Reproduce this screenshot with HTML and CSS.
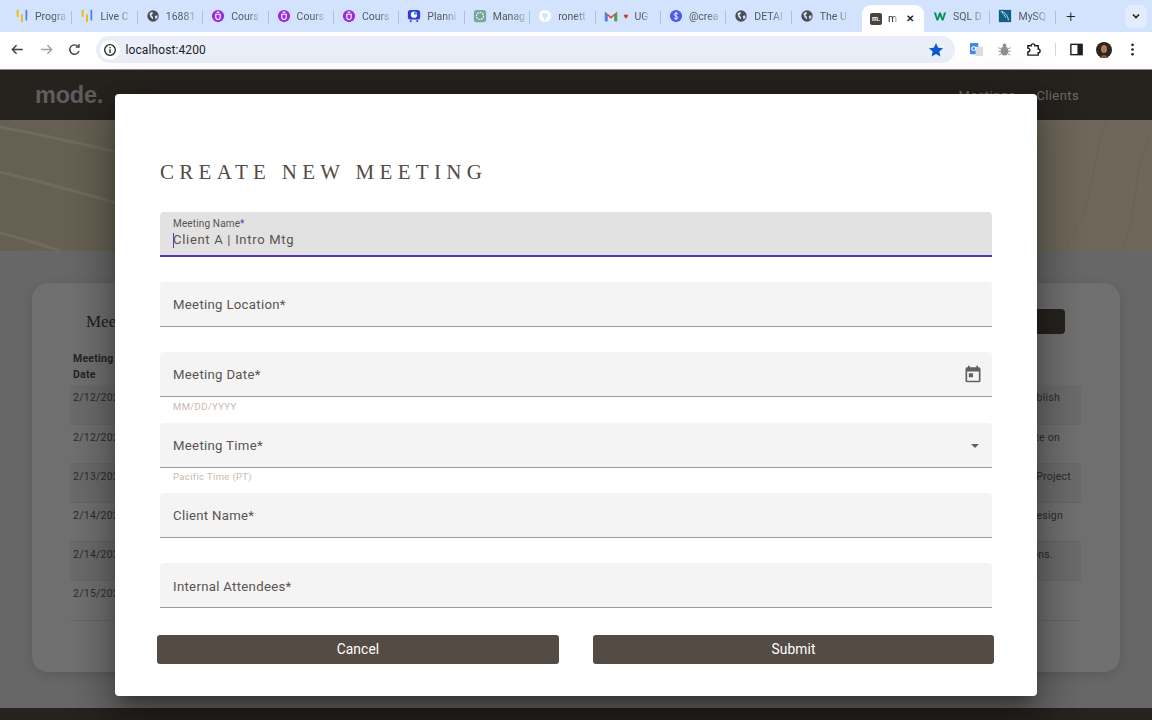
FILE: index.html
```html
<!DOCTYPE html>
<html lang="en">
<head>
<meta charset="utf-8">
<title>mode.</title>
<link rel="stylesheet" href="styles.css">
</head>
<body>
<div class="browser">
  <div class="tabstrip">
    <div class="tab sep"><svg class="fav" viewBox="0 0 16 16"><rect x="2" y="1" width="2" height="8" fill="#f4b400"/><rect x="7" y="6" width="2" height="9" fill="#f4b400"/><rect x="12" y="1" width="2" height="12" fill="#4285f4"/></svg><span class="tl">Progra</span></div>
    <div class="tab sep"><svg class="fav" viewBox="0 0 16 16"><rect x="2" y="1" width="2" height="8" fill="#f4b400"/><rect x="7" y="6" width="2" height="9" fill="#f4b400"/><rect x="12" y="1" width="2" height="12" fill="#4285f4"/></svg><span class="tl">Live C</span></div>
    <div class="tab sep"><svg class="fav" viewBox="0 0 16 16"><circle cx="8" cy="8" r="6.5" fill="#4a4d52"/><path d="M4 5l3-2 1 2-2 2 2 2v3L5 9zM10 8l3-1v3l-2 2z" fill="#d3e3fd"/></svg><span class="tl">16881</span></div>
    <div class="tab sep"><svg class="fav" viewBox="0 0 16 16"><circle cx="8" cy="8" r="7" fill="#9a2be2"/><path d="M5.500 6v3.500a2.500 2.500 0 0 0 5 0V6z" fill="none" stroke="#fff" stroke-width="1.300"/><rect x="6.500" y="3" width="3" height="1.500" fill="#fff"/></svg><span class="tl">Cours</span></div>
    <div class="tab sep"><svg class="fav" viewBox="0 0 16 16"><circle cx="8" cy="8" r="7" fill="#9a2be2"/><path d="M5.500 6v3.500a2.500 2.500 0 0 0 5 0V6z" fill="none" stroke="#fff" stroke-width="1.300"/><rect x="6.500" y="3" width="3" height="1.500" fill="#fff"/></svg><span class="tl">Cours</span></div>
    <div class="tab sep"><svg class="fav" viewBox="0 0 16 16"><circle cx="8" cy="8" r="7" fill="#9a2be2"/><path d="M5.500 6v3.500a2.500 2.500 0 0 0 5 0V6z" fill="none" stroke="#fff" stroke-width="1.300"/><rect x="6.500" y="3" width="3" height="1.500" fill="#fff"/></svg><span class="tl">Cours</span></div>
    <div class="tab sep"><svg class="fav" viewBox="0 0 16 16"><rect x="1" y="1" width="14" height="11" rx="3" fill="#3a38d8"/><circle cx="8" cy="6.500" r="3.600" fill="#fff"/><path d="M8 6.500V3a3.500 3.500 0 0 1 3.500 3.500z" fill="#20b5e8"/><path d="M4 12l-1 3 3-1zM12 12l1 3-3-1z" fill="#3a38d8"/></svg><span class="tl">Planni</span></div>
    <div class="tab sep"><svg class="fav" viewBox="0 0 16 16"><rect x="1" y="1" width="14" height="14" rx="3" fill="#74aa9c"/><circle cx="8" cy="8" r="4" fill="none" stroke="#fff" stroke-width="1.200" stroke-dasharray="2 1"/></svg><span class="tl">Manag</span></div>
    <div class="tab sep"><svg class="fav" viewBox="0 0 16 16"><circle cx="8" cy="8" r="7" fill="#fff"/><path d="M5 4l1.500 1h3L11 4v3.500c0 1.500-1 2.500-2 2.700V13H7v-2.800C6 10 5 9 5 7.500z" fill="#d3e3fd"/></svg><span class="tl">ronett</span></div>
    <div class="tab sep gm"><svg class="fav" viewBox="0 0 16 16"><path d="M1 14V3l7 5.500L15 3v11h-3V7.500L8 11 4 7.500V14z" fill="#ea4335"/><path d="M12 14V7l3-4v11z" fill="#34a853"/><path d="M1 14V3l3 4v7z" fill="#4285f4"/></svg><span class="heart">♥</span><span class="tl">UG</span></div>
    <div class="tab sep"><svg class="fav" viewBox="0 0 16 16"><circle cx="8" cy="8" r="7" fill="#4f5bf0"/><path d="M10 5.500C9 4.500 6 4.500 6 6.300S10 8 10 9.800 7 11.500 6 10.500M8 3.500v9" fill="none" stroke="#fff" stroke-width="1.100"/></svg><span class="tl">@crea</span></div>
    <div class="tab sep"><svg class="fav" viewBox="0 0 16 16"><circle cx="8" cy="8" r="6.500" fill="#4a4d52"/><path d="M4 5l3-2 1 2-2 2 2 2v3L5 9zM10 8l3-1v3l-2 2z" fill="#d3e3fd"/></svg><span class="tl">DETAI</span></div>
    <div class="tab lastsep"><svg class="fav" viewBox="0 0 16 16"><circle cx="8" cy="8" r="6.500" fill="#4a4d52"/><path d="M4 5l3-2 1 2-2 2 2 2v3L5 9zM10 8l3-1v3l-2 2z" fill="#d3e3fd"/></svg><span class="tl">The U</span></div>
    <div class="tab active"><span class="mfav">m.</span><span class="tl short">m</span><span class="close">✕</span></div>
    <div class="tab sep"><svg class="fav" viewBox="0 0 16 16"><path d="M1 4h2.500L5 10l2-6h2l2 6 1.500-6H15l-3 9h-2L8 8l-2 5H4z" fill="#0b8f5a"/></svg><span class="tl">SQL D</span></div>
    <div class="tab sep"><svg class="fav" viewBox="0 0 16 16"><rect x="1" y="1" width="14" height="14" fill="#0f5f87"/><path d="M3 3c5 0 8 4 9 10M5 3c0 3 3 4 4 7" fill="none" stroke="#d8e8f0" stroke-width="1"/></svg><span class="tl">MySQ</span></div>
    <div class="newtab">+</div>
    <div class="tabmenu"><svg width="10" height="10" viewBox="0 0 10 10"><path d="M2 3.500l3 3 3-3" fill="none" stroke="#1f1f1f" stroke-width="1.600"/></svg></div>
  </div>

  <div class="toolbar">
    <svg class="tb" viewBox="0 0 16 16"><path d="M13.500 8H3M7 3.500L2.500 8 7 12.500" fill="none" stroke="#3c4043" stroke-width="1.500"/></svg>
    <svg class="tb" viewBox="0 0 16 16"><path d="M2.500 8H13M9 3.500L13.500 8 9 12.500" fill="none" stroke="#9aa0a6" stroke-width="1.500"/></svg>
    <svg class="tb" viewBox="0 0 16 16"><path d="M12.800 9.500A5 5 0 1 1 11.500 4.500M12.800 2v3.500H9.300" fill="none" stroke="#3c4043" stroke-width="1.500"/></svg>
    <div class="omnibox">
      <span class="info"><svg width="14" height="14" viewBox="0 0 14 14"><circle cx="7" cy="7" r="5.300" fill="none" stroke="#1f1f1f" stroke-width="1.300"/><path d="M7 6.300V10M7 4v1.200" stroke="#1f1f1f" stroke-width="1.300"/></svg></span>
      <span class="url">localhost:4200</span>
      <svg class="star" width="16" height="16" viewBox="0 0 16 16"><path d="M8 1l2.100 4.700 5 .5-3.800 3.400 1.100 5L8 12l-4.400 2.600 1.100-5L.9 6.200l5-.5z" fill="#0b57d0"/></svg>
    </div>
    <div class="exts">
      <svg class="ex" viewBox="0 0 16 16"><rect x="1" y="1" width="9" height="12" rx="1" fill="#4285f4"/><rect x="7" y="5" width="8" height="10" fill="#dadce0"/><circle cx="5" cy="7" r="2" fill="none" stroke="#fff" stroke-width="1.200"/></svg>
      <svg class="ex" viewBox="0 0 16 16"><ellipse cx="8" cy="9.500" rx="4" ry="5" fill="#8f8f8f"/><circle cx="8" cy="3.500" r="2" fill="#8f8f8f"/><path d="M1.500 6l3 1.500M14.500 6l-3 1.500M1.500 10h3M14.500 10h-3M2 14l3-2M14 14l-3-2" stroke="#8f8f8f"/></svg>
      <svg class="ex" viewBox="0 0 16 16"><path d="M2 4h3.500a2 2 0 0 1 4 0H13v3.500a2 2 0 0 1 0 4V14H2V10.500a2 2 0 0 0 0-4z" fill="none" stroke="#1f1f1f" stroke-width="1.500"/></svg>
      <span class="vsep"></span>
      <svg class="ex" viewBox="0 0 16 16"><rect x="2" y="2.500" width="12" height="11" fill="none" stroke="#1f1f1f" stroke-width="1.500"/><rect x="9" y="2.500" width="5" height="11" fill="#1f1f1f"/></svg>
      <svg class="ex av" viewBox="0 0 16 16"><circle cx="8" cy="8" r="8" fill="#2c241e"/><ellipse cx="8" cy="7" rx="3" ry="4" fill="#b07a55"/><path d="M4 16c0-4 8-4 8 0z" fill="#6a5a4e"/></svg>
      <svg class="ex dots" viewBox="0 0 16 16"><circle cx="8" cy="3" r="1.400" fill="#1f1f1f"/><circle cx="8" cy="8" r="1.400" fill="#1f1f1f"/><circle cx="8" cy="13" r="1.400" fill="#1f1f1f"/></svg>
    </div>
  </div>

  <div class="app">
    <header class="nav">
      <span class="logo">mode.</span>
      <nav class="links"><span>Meetings</span><span>Clients</span></nav>
    </header>
    <div class="hero">
      <svg class="swirl" viewBox="0 0 1152 131" preserveAspectRatio="none">
        <path d="M0 7C50 16 90 26 125 34M0 52C50 64 90 75 125 86M0 113C20 118 40 124 60 131" fill="none" stroke="#706b60" stroke-width="3"/>
        <path d="M1107 2C1090 40 1095 90 1063 131M1152 13C1130 50 1140 100 1120 131" fill="none" stroke="#696254" stroke-width="1"/>
      </svg>
    </div>
    <main class="content">
      <section class="card">
        <div class="cardhead">
          <h2 class="cardtitle">Meetings</h2>
          <button class="newbtn">New Meeting</button>
        </div>
        <table class="tbl">
          <thead><tr><th class="c1">Meeting<br>Date</th><th class="c2"></th></tr></thead>
          <tbody>
            <tr class="odd"><td>2/12/2024</td><td class="r">Establish</td></tr>
            <tr><td>2/12/2024</td><td class="r">Update on</td></tr>
            <tr class="odd"><td>2/13/2024</td><td class="r">Project</td></tr>
            <tr><td>2/14/2024</td><td class="r">Design</td></tr>
            <tr class="odd"><td>2/14/2024</td><td class="r">Actions.</td></tr>
            <tr><td>2/15/2024</td><td class="r"></td></tr>
          </tbody>
        </table>
      </section>
    </main>
    <footer class="foot"></footer>
  </div>

  <div class="modal">
    <h1 class="mtitle">CREATE NEW MEETING</h1>
    <form class="form">
      <div class="field focused">
        <span class="flabel">Meeting Name<em>*</em></span>
        <span class="fvalue"><i class="caret"></i>Client A | Intro Mtg</span>
      </div>
      <div class="field"><span class="ph">Meeting Location*</span></div>
      <div class="field">
        <span class="ph">Meeting Date*</span>
        <svg class="ficon" viewBox="0 0 24 24"><path d="M19 4h-1V2h-2v2H8V2H6v2H5a2 2 0 0 0-2 2v14a2 2 0 0 0 2 2h14a2 2 0 0 0 2-2V6a2 2 0 0 0-2-2zm0 16H5V9h14zM7 11h5v5H7z" fill="#616161"/></svg>
      </div>
      <div class="hint">MM/DD/YYYY</div>
      <div class="field low1">
        <span class="ph">Meeting Time*</span>
        <span class="arrow"></span>
      </div>
      <div class="hint">Pacific Time (PT)</div>
      <div class="field low1"><span class="ph">Client Name*</span></div>
      <div class="field low2"><span class="ph">Internal Attendees*</span></div>
    </form>
    <div class="actions">
      <button class="btn" type="button">Cancel</button>
      <button class="btn" type="button">Submit</button>
    </div>
  </div>
</div>
</body>
</html>
```
FILE: styles.css
```css
* { box-sizing: border-box; }
html, body { margin: 0; padding: 0; }
body { width: 1152px; height: 720px; overflow: hidden; font-family: Roboto, "Liberation Sans", sans-serif; background: #676767; }
.browser { position: relative; width: 1152px; height: 720px; display: flex; flex-direction: column; overflow: hidden; }

.tabstrip { height: 32px; background: #d3e3fd; display: flex; align-items: center; padding-left: 7px; flex: none; }
.tab { width: 65.4px; height: 32px; display: flex; align-items: center; padding-left: 8px; gap: 6px; position: relative; font-size: 10.5px; color: #55585d; flex: none; }
.sep::after { content: ""; position: absolute; right: 0; top: 11px; width: 1px; height: 13px; background: #a8c0e8; }
.fav { width: 14px; height: 14px; flex: none; }
.tl { white-space: nowrap; flex: none; -webkit-mask-image: linear-gradient(90deg, #000 60%, rgba(0,0,0,.25)); mask-image: linear-gradient(90deg, #000 60%, rgba(0,0,0,.25)); }
.gm { gap: 3px; }
.heart { font-size: 8px; color: #d93025; width: 11px; text-align: center; flex: none; }
.active { background: #fff; border-radius: 9px 9px 0 0; width: 62px; margin: 5px 1px 0 5px; height: 27px; padding-left: 8px; color: #1f1f1f; gap: 6px; }
.mfav { width: 12px; height: 12px; background: #4a423c; color: #fff; border-radius: 2px; font: 700 7px/12px Roboto, sans-serif; text-align: center; flex: none; }
.short { width: 9px; }
.close { font-size: 10px; color: #1f1f1f; margin-left: 3px; font-weight: 700; }
.newtab { font-size: 17px; font-weight: 300; color: #1f1f1f; margin-left: 6px; width: 18px; text-align: center; line-height: 32px; }
.tabmenu { width: 22px; height: 23px; margin-left: auto; margin-right: 5px; background: #e3ecfb; border-radius: 7px; display: flex; align-items: center; justify-content: center; }

.toolbar { height: 38px; background: #fff; display: flex; align-items: center; padding: 0 0 2px 10px; flex: none; border-bottom: 1px solid #8a8a8a; }
.tb { width: 15px; height: 15px; margin-right: 13.5px; flex: none; }
.omnibox { width: 859px; height: 27px; background: #e9eef8; border-radius: 14px; display: flex; align-items: center; padding-left: 4px; position: relative; flex: none; }
.info { width: 20px; height: 20px; background: #fff; border-radius: 50%; display: flex; align-items: center; justify-content: center; margin-right: 6px; }
.url { font-size: 12px; color: #1f1f1f; letter-spacing: .1px; }
.star { position: absolute; right: 11px; top: 5.5px; }
.exts { display: flex; align-items: center; margin-left: 14px; }
.ex { width: 15px; height: 15px; margin-right: 13.7px; flex: none; }
.vsep { width: 1px; height: 13px; background: #c6d6ef; margin-right: 13px; }
.av { width: 16px; height: 16px; margin-right: 13px; margin-left: -1px; }
.dots { margin-right: 0; }

.app { flex: 1; display: flex; flex-direction: column; min-height: 0; }
.nav { height: 50px; background: #26221e; display: flex; align-items: center; justify-content: space-between; padding: 0 73px 0 35px; flex: none; }
.logo { font: 700 23.5px/1 "Liberation Sans", Arial, sans-serif; color: #5e5e5e; letter-spacing: -.2px; padding-top: 2px; }
.links { display: flex; gap: 21px; font-size: 13px; color: #6c6c6c; letter-spacing: .4px; }
.hero { height: 131px; background: linear-gradient(90deg, #666052, #6e675a); position: relative; flex: none; }
.swirl { width: 100%; height: 100%; display: block; }
.content { flex: 1; background: #676767; padding: 32px; min-height: 0; }
.card { width: 1088px; height: 389px; background: #707070; border-radius: 16px; padding: 26px 39px 0 38px; box-shadow: 0 3px 12px rgba(0,0,0,.12); }
.cardhead { display: flex; justify-content: space-between; align-items: flex-start; height: 42px; padding-left: 16px; margin-right: 16px; }
.cardtitle { margin: 3px 0 0; font: 400 17px/20px "Liberation Serif", serif; color: #1f1d1b; }
.newbtn { width: 120px; height: 25px; background: #26221e; border: 0; border-radius: 4px; color: #26221e; font-size: 11px; }
.tbl { width: 1011px; border-collapse: collapse; font-size: 10.5px; color: #2e2c2a; letter-spacing: .25px; }
.tbl th { text-align: left; font-weight: 700; padding: 0 0 0 3px; height: 34px; line-height: 16px; vertical-align: top; color: #262422; }
.tbl td { height: 39.2px; vertical-align: top; padding: 6px 3px 0; border-bottom: 1px solid #676767; }
.tbl .odd td { background: #6b6b6b; }
.tbl .r { text-align: right; padding-right: 21px; }
.tbl tr:nth-child(3) .r { padding-right: 10px; }
.tbl tr:nth-child(4) .r { padding-right: 18px; }
.tbl tr:nth-child(5) .r { padding-right: 28px; }

.modal { position: absolute; left: 115px; top: 94px; width: 922px; height: 602px; background: #fff; border-radius: 4px; padding: 67px 45px 0 45px; box-shadow: 0 11px 15px -7px rgba(0,0,0,.3), 0 24px 38px 3px rgba(0,0,0,.2), 0 9px 46px 8px rgba(0,0,0,.2); display: flex; flex-direction: column; }
.mtitle { margin: 0; font: 400 21px/22px "Liberation Serif", serif; letter-spacing: 5.3px; color: #544b45; height: 51px; }
.form { display: flex; flex-direction: column; }
.field { width: 832px; height: 45px; background: #f4f4f4; border-radius: 4px 4px 0 0; border-bottom: 1px solid #9b9b9b; padding: 0 13px; display: flex; align-items: center; justify-content: space-between; margin-bottom: 25.2px; color: #5a5350; position: relative; flex: none; }
.field.low1 { padding-top: 2px; }
.field.low2 { padding-top: 3px; }
.field.focused { display: block; background: #e2e2e2; border-bottom: 2px solid #5e35b1; padding-top: 6px; }
.flabel { display: block; font-size: 10px; line-height: 12px; letter-spacing: .15px; color: #5a534e; }
.flabel em { font-style: normal; color: #5e35b1; }
.fvalue { display: block; font-size: 13px; line-height: 20px; letter-spacing: .7px; color: #5a534e; position: relative; }
.caret { position: absolute; left: 0; top: 3px; width: 1px; height: 15px; background: #5e35b1; }
.ph { font-size: 13.2px; letter-spacing: .3px; }
.ficon { width: 20px; height: 20px; margin-right: -3.5px; }
.arrow { width: 0; height: 0; border-left: 4.5px solid transparent; border-right: 4.5px solid transparent; border-top: 4.5px solid #616161; margin-right: 0; }
.hint { font-size: 9.5px; line-height: 11px; letter-spacing: .35px; color: #c9b9af; padding-left: 13px; height: 0; position: relative; top: -21.5px; }
.actions { display: flex; justify-content: space-between; margin: 1.8px -2px 0 -3px; }
.btn { width: 402px; height: 29px; background: #554b45; border: 0; border-radius: 3px; color: #fff; font: 400 13.8px/29px Roboto, sans-serif; letter-spacing: .1px; padding: 0; }
.btn + .btn { width: 401px; }
.foot { height: 12px; background: #26221e; flex: none; }
```
